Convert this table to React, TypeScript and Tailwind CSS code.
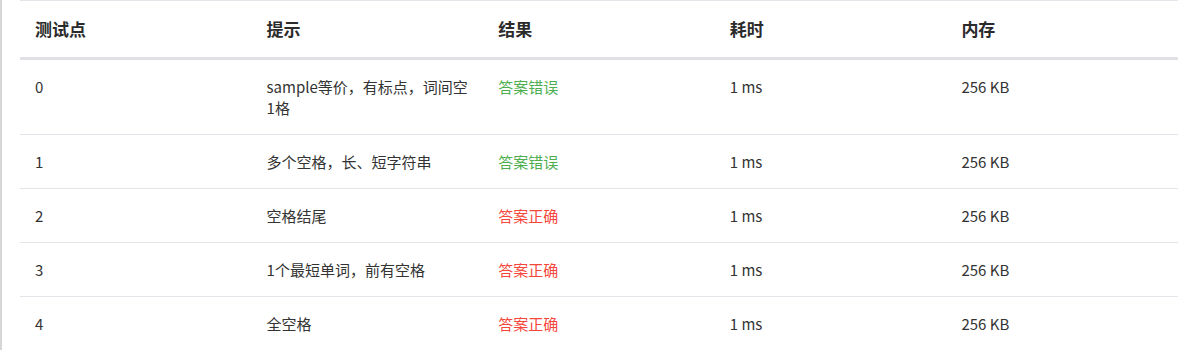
import React from 'react';

type Row = {
  id: number;
  hint: React.ReactNode;
  result: 'WA' | 'AC';
  time: string;
  memory: string;
};

const rows: Row[] = [
  { id: 0, hint: <>sample等价，有标点，词间空<br />1格</>, result: 'WA', time: '1 ms', memory: '256 KB' },
  { id: 1, hint: '多个空格，长、短字符串', result: 'WA', time: '1 ms', memory: '256 KB' },
  { id: 2, hint: '空格结尾', result: 'AC', time: '1 ms', memory: '256 KB' },
  { id: 3, hint: '1个最短单词，前有空格', result: 'AC', time: '1 ms', memory: '256 KB' },
  { id: 4, hint: '全空格', result: 'AC', time: '1 ms', memory: '256 KB' },
];

const headers = ['测试点', '提示', '结果', '耗时', '内存'];

const App: React.FC = () => {
  return (
    <div
      className="min-h-[350px] bg-white border-l-2 border-[#d6d6d6] pl-[18px] pr-[8px] text-[#333]"
      style={{ fontFamily: '"Noto Sans CJK SC", "Noto Sans", sans-serif' }}
    >
      <table className="w-full table-fixed border-collapse border-t border-[#e3e5ea]">
        <thead>
          <tr className="border-b-[3px] border-[#dfe1e6]">
            {headers.map((h) => (
              <th key={h} className="px-[15px] py-4 text-left text-[17px] leading-6 font-bold text-[#2b2b2b]">
                {h}
              </th>
            ))}
          </tr>
        </thead>
        <tbody>
          {rows.map((row) => (
            <tr key={row.id} className="border-b border-[#e3e5ea] align-top">
              <td className="px-[15px] py-4 text-[15px] leading-[21px]">{row.id}</td>
              <td className="px-[15px] py-4 text-[15px] leading-[21px]">{row.hint}</td>
              <td
                className={`px-[15px] py-4 text-[15px] leading-[21px] ${
                  row.result === 'WA' ? 'text-[#4cae4f]' : 'text-[#f5473b]'
                }`}
              >
                {row.result === 'WA' ? '答案错误' : '答案正确'}
              </td>
              <td className="px-[15px] py-4 text-[15px] leading-[21px]">{row.time}</td>
              <td className="px-[15px] py-4 text-[15px] leading-[21px]">{row.memory}</td>
            </tr>
          ))}
        </tbody>
      </table>
    </div>
  );
};

export default App;
